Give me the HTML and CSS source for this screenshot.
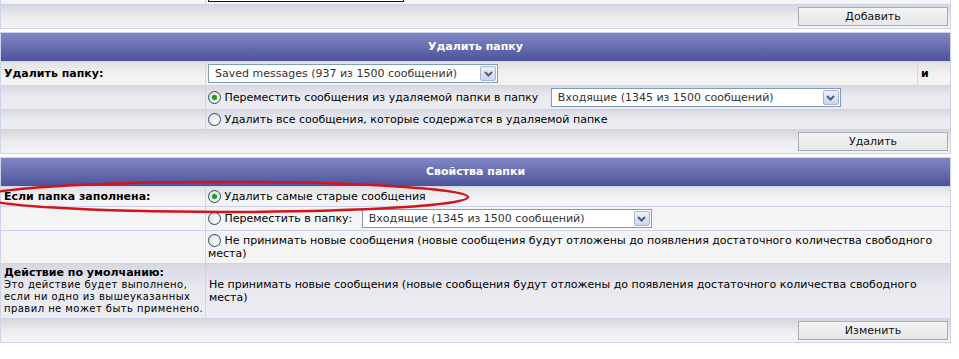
FILE: index.html
```html
<!DOCTYPE html>
<html lang="ru">
<head>
    <meta charset="UTF-8">
    <title>Управление папками</title>
    <link rel="stylesheet" href="styles.css">
</head>
<body>
<div class="page">
    <!-- Add folder -->
    <table class="tablebg first">
        <colgroup><col class="col-label"><col></colgroup>
        <tr>
            <td class="row1 label"><b>Добавить папку:</b></td>
            <td class="row1 tight"><input type="text" class="post"></td>
        </tr>
        <tr>
            <td class="cat" colspan="2"><button class="btnlite">Добавить</button></td>
        </tr>
    </table>

    <!-- Remove folder -->
    <table class="tablebg">
        <colgroup><col class="col-label"><col><col class="col-and"></colgroup>
        <tr><th colspan="3">Удалить папку</th></tr>
        <tr>
            <td class="row1 top label"><b>Удалить папку:</b></td>
            <td class="row1 top tight">
                <span class="select"><span class="select-value">Saved messages (937 из 1500 сообщений)</span><span class="select-btn"><svg width="9" height="6" viewBox="0 0 9 6"><path d="M1 1 L4.5 4.5 L8 1" fill="none" stroke="#4a5d80" stroke-width="2"/></svg></span></span>
            </td>
            <td class="row1 top label"><b>и</b></td>
        </tr>
        <tr>
            <td class="row2"></td>
            <td class="row2 tight" colspan="2">
                <label><input type="radio" class="radio" name="remove_action" checked> Переместить сообщения из удаляемой папки в папку</label>
                <span class="select gap-wide"><span class="select-value">Входящие (1345 из 1500 сообщений)</span><span class="select-btn"><svg width="9" height="6" viewBox="0 0 9 6"><path d="M1 1 L4.5 4.5 L8 1" fill="none" stroke="#4a5d80" stroke-width="2"/></svg></span></span>
            </td>
        </tr>
        <tr>
            <td class="row2"></td>
            <td class="row2" colspan="2">
                <label><input type="radio" class="radio" name="remove_action"> Удалить все сообщения, которые содержатся в удаляемой папке</label>
            </td>
        </tr>
        <tr>
            <td class="cat" colspan="3"><button class="btnlite">Удалить</button></td>
        </tr>
    </table>

    <!-- Folder options -->
    <table class="tablebg">
        <colgroup><col class="col-label"><col></colgroup>
        <tr><th colspan="2">Свойства папки</th></tr>
        <tr>
            <td class="row1 top label"><b>Если папка заполнена:</b></td>
            <td class="row1 top">
                <label><input type="radio" class="radio" name="full_action" checked> Удалить самые старые сообщения</label>
            </td>
        </tr>
        <tr>
            <td class="row1"></td>
            <td class="row1 tight">
                <label><input type="radio" class="radio" name="full_action"> Переместить в папку:</label>
                <span class="select gap-narrow"><span class="select-value">Входящие (1345 из 1500 сообщений)</span><span class="select-btn"><svg width="9" height="6" viewBox="0 0 9 6"><path d="M1 1 L4.5 4.5 L8 1" fill="none" stroke="#4a5d80" stroke-width="2"/></svg></span></span>
            </td>
        </tr>
        <tr>
            <td class="row1"></td>
            <td class="row1">
                <label><input type="radio" class="radio" name="full_action"> Не принимать новые сообщения (новые сообщения будут отложены до появления достаточного количества свободного места)</label>
            </td>
        </tr>
        <tr>
            <td class="row2 label">
                <b class="title">Действие по умолчанию:</b>
                <div class="explain">Это действие будет выполнено,<br>если ни одно из вышеуказанных<br>правил не может быть применено.</div>
            </td>
            <td class="row2 text">Не принимать новые сообщения (новые сообщения будут отложены до появления достаточного количества свободного места)</td>
        </tr>
        <tr>
            <td class="cat" colspan="2"><button class="btnlite">Изменить</button></td>
        </tr>
    </table>

    <!-- hand-drawn mark -->
    <svg class="mark" width="480" height="50" viewBox="0 0 480 50">
        <ellipse cx="225" cy="25" rx="243" ry="15" fill="none" stroke="#d3141c" stroke-width="2.5"/>
    </svg>
</div>
</body>
</html>
```

FILE: styles.css
```css
body {
    margin: 0;
    background: #fff;
    font-family: "DejaVu Sans", Verdana, sans-serif;
    font-size: 11px;
    color: #000;
}
.page {
    position: relative;
    display: flow-root;
    width: 951px;
}
.tablebg {
    width: 951px;
    table-layout: fixed;
    border-collapse: separate;
    border-spacing: 1px;
    background: #cdd3e9;
    margin-bottom: 3px;
}
.first {
    margin-top: -20px;
}
.col-label {
    width: 204px;
}
.col-and {
    width: 32px;
}
th {
    padding: 7px 3px;
    line-height: 14px;
    color: #fff;
    font-weight: bold;
    text-align: center;
    background: linear-gradient(#8186c5, #6a70b2 45%, #4b5399);
}
td {
    padding: 3px 2px;
    line-height: 13px;
    vertical-align: middle;
}
td.tight {
    padding-top: 2px;
    padding-bottom: 2px;
}
td.label {
    padding-left: 3px;
}
.row1 {
    background: #f4f4f4;
}
.row1.top {
    background: linear-gradient(#e2e2e2, #f3f3f3 60%);
}
.row2 {
    background: linear-gradient(#d8d8e4, #e9e9f0 45%, #ececf2);
}
.cat {
    padding: 2px;
    text-align: right;
    background: linear-gradient(#d6d6de, #eeeef0 55%, #f3f3f3);
}
.title {
    display: block;
    line-height: 12px;
}
.explain {
    font-size: 10px;
    line-height: 12px;
    letter-spacing: 0.45px;
    white-space: nowrap;
}
.text {
    padding-left: 3px;
}
.post {
    width: 196px;
    height: 19px;
    box-sizing: border-box;
    border: 1px solid #111;
    margin: 0;
    vertical-align: middle;
}
.btnlite {
    width: 150px;
    height: 19px;
    padding: 0;
    border: 1px solid #a4abb9;
    background: linear-gradient(#f3f3f3, #e7e7e7);
    font-family: "DejaVu Sans", Verdana, sans-serif;
    font-size: 11px;
    color: #111;
    vertical-align: middle;
}
.radio {
    appearance: none;
    -webkit-appearance: none;
    width: 13px;
    height: 13px;
    margin: -1px 0;
    box-sizing: border-box;
    border: 1px solid #264a6e;
    border-radius: 50%;
    background: radial-gradient(circle at 65% 65%, #ffffff, #d8d8d2);
    vertical-align: -2px;
}
.radio:checked {
    background: radial-gradient(circle, #1f9c1f 0 2px, #6cc86c 2.6px, rgba(255, 255, 255, 0) 3.2px),
                radial-gradient(circle at 65% 65%, #ffffff, #d8d8d2);
}
.select {
    display: inline-flex;
    align-items: center;
    width: 290px;
    height: 19px;
    box-sizing: border-box;
    border: 1px solid #7f9db9;
    background: #fff;
    vertical-align: middle;
}
.gap-wide {
    margin-left: 9px;
}
.gap-narrow {
    margin-left: 6px;
}
.select-value {
    flex: 1;
    padding-left: 6px;
    color: #333;
    white-space: nowrap;
    overflow: hidden;
}
.select-btn {
    display: flex;
    align-items: center;
    justify-content: center;
    width: 16px;
    height: 15px;
    margin-right: 1px;
    box-sizing: border-box;
    border: 1px solid #a8b4d0;
    border-radius: 2px;
    background: linear-gradient(#eef1f8, #cbd4e9);
}
.mark {
    position: absolute;
    left: 0;
    top: 172px;
    pointer-events: none;
}
```
